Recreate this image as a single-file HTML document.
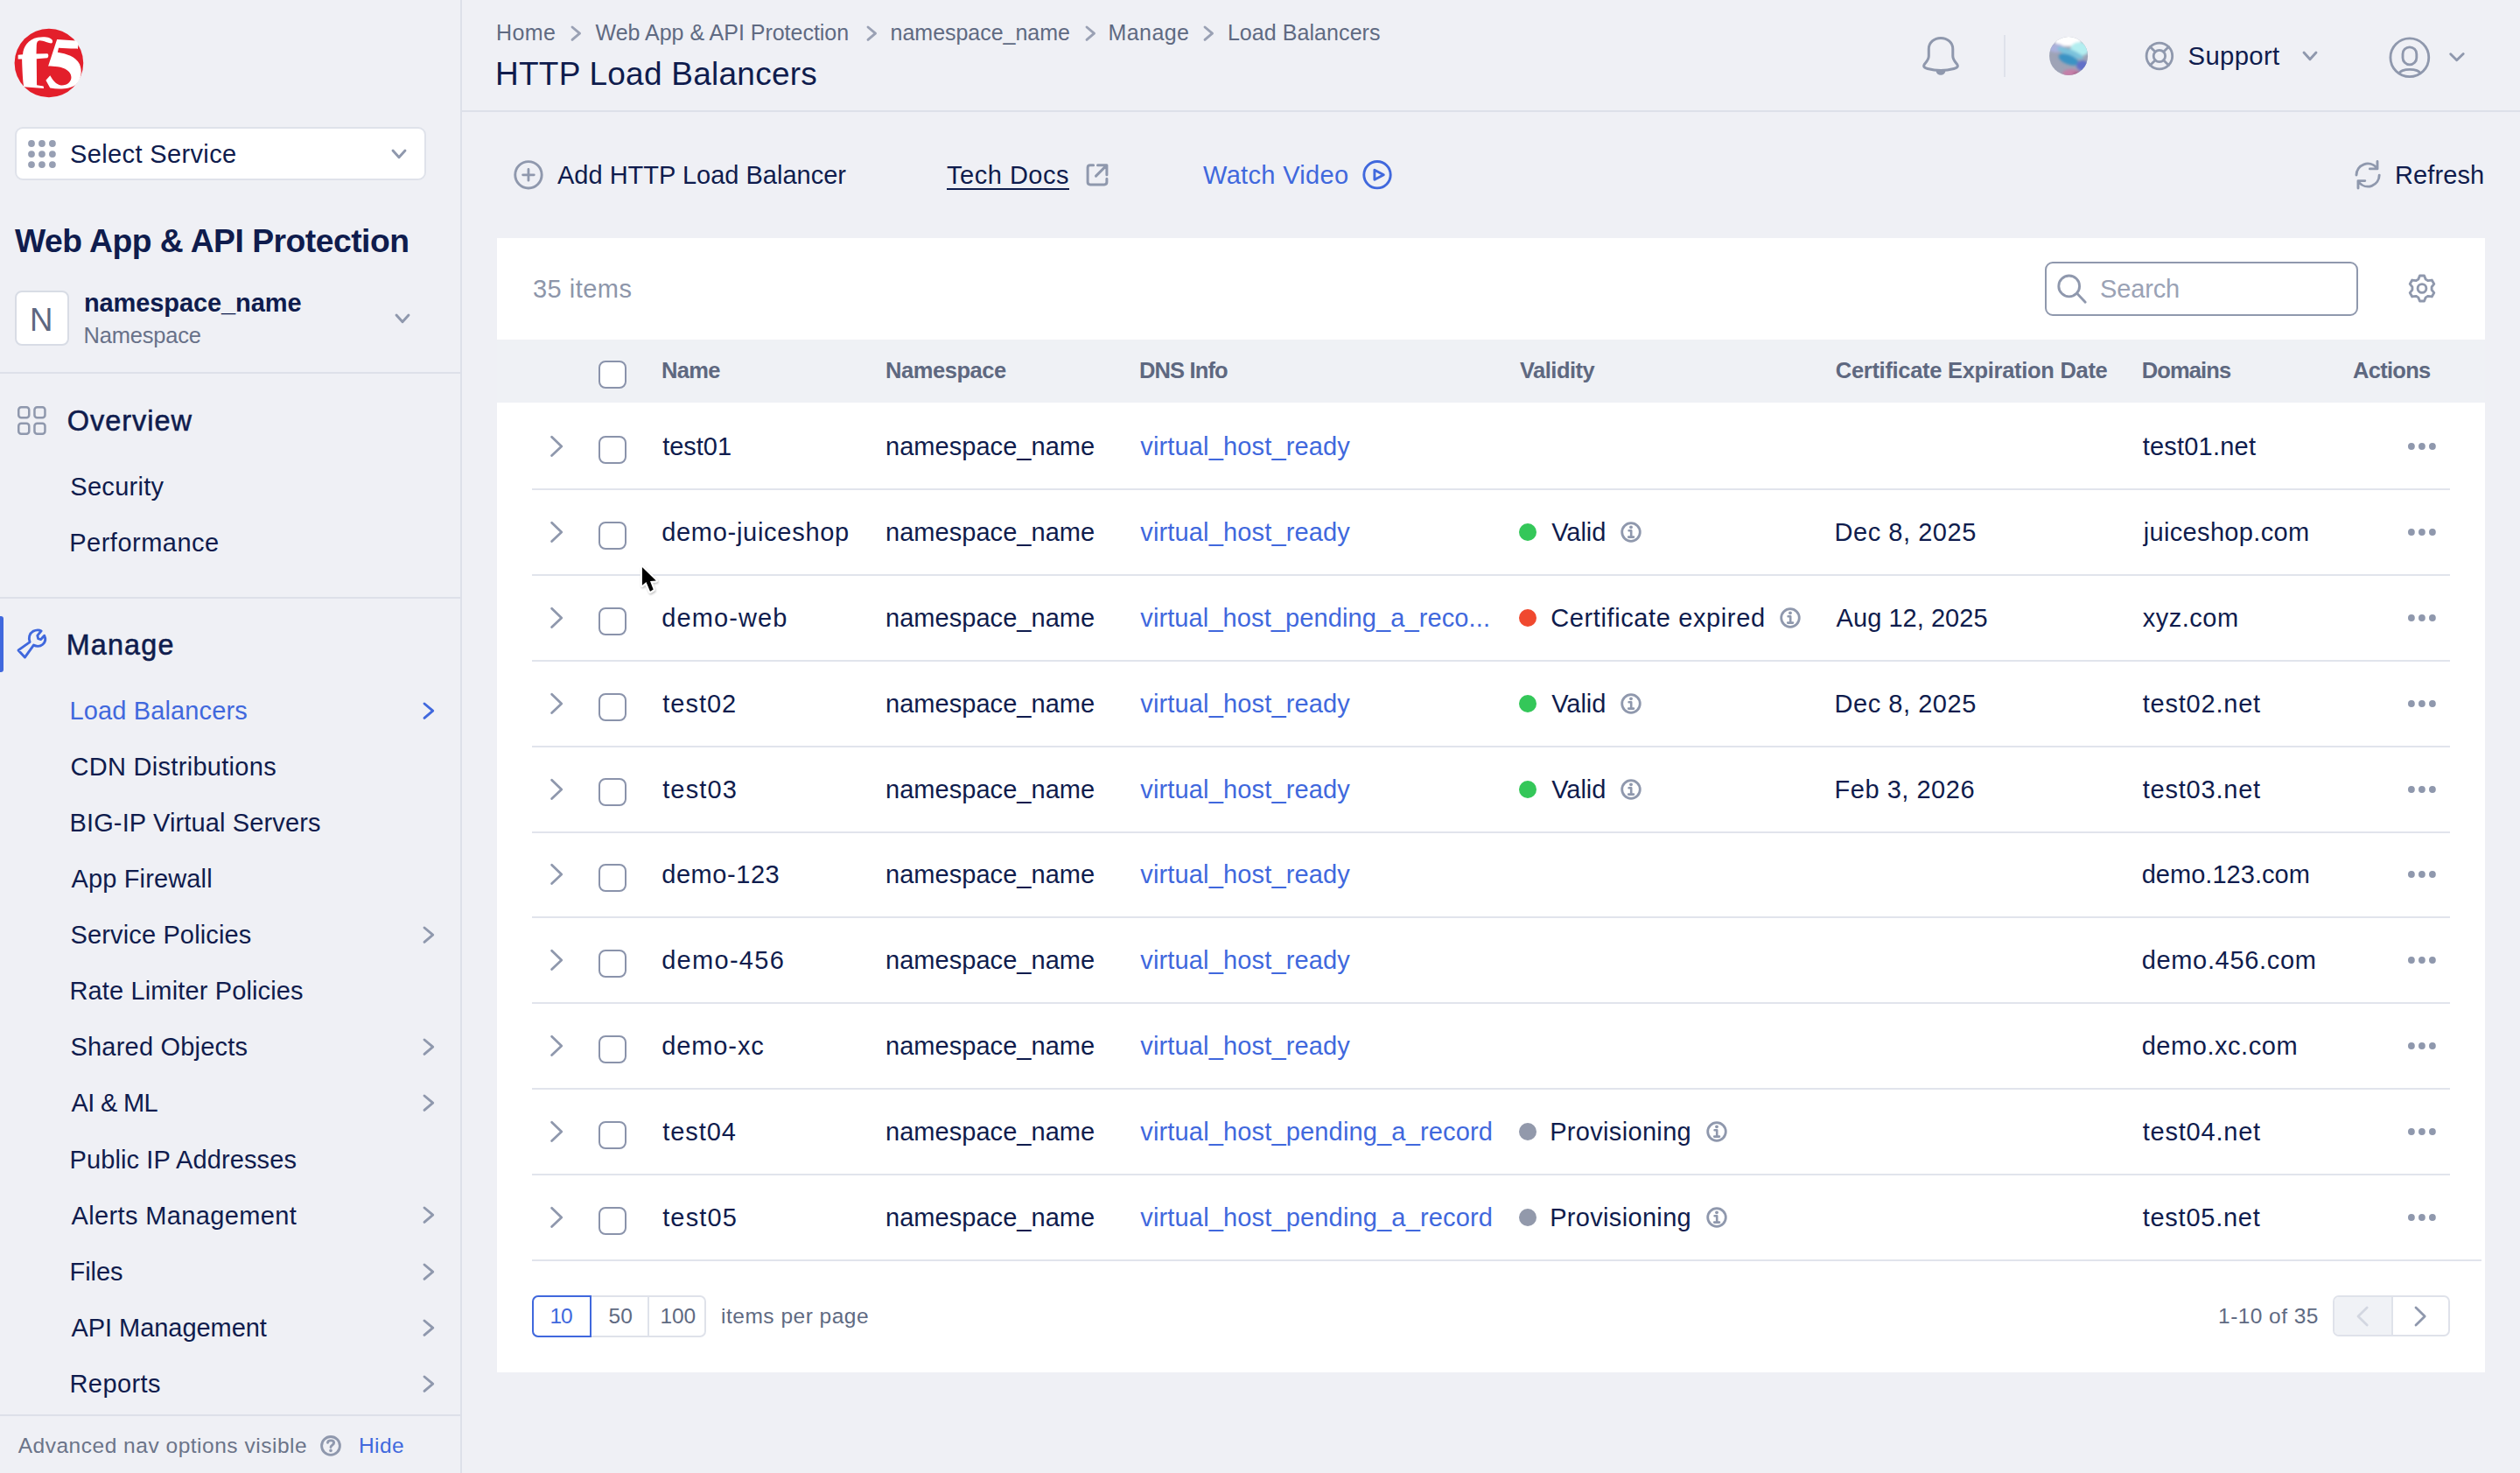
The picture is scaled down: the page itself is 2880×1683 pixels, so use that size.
<!DOCTYPE html>
<html><head><meta charset="utf-8"><style>
html,body{margin:0;padding:0;width:2880px;height:1683px;overflow:hidden;background:#eff0f5;font-family:"Liberation Sans", sans-serif;}
.t{position:absolute;white-space:nowrap;}
</style></head><body>
<div style="position:absolute;left:526px;top:0px;width:2px;height:1683px;background:#dde0e9"></div>
<svg style="position:absolute;left:16px;top:32px;" width="80" height="80" viewBox="0 0 1473 1473" fill="none"><circle cx="735" cy="737" r="724" fill="#e31f2b"/>
<path fill="#fff" d="M85 565 L185 558 C195 400 300 240 500 200 C650 175 790 200 812 270 C815 300 800 322 780 322 C740 320 620 265 540 262 C495 265 478 300 475 360 L470 545 L700 540 C730 550 735 610 700 630 L475 650 L480 1200 L620 1225 L628 1270 L205 1240 L198 1180 C185 1100 170 800 168 655 L85 652 Z"/>
<path fill="#fff" d="M905 240 L1300 268 C1330 290 1350 320 1352 345 L1342 440 C1320 425 1280 435 1200 432 L940 420 L918 512 C1100 540 1300 600 1380 760 C1440 900 1420 1080 1300 1190 C1180 1280 960 1300 760 1260 L670 1100 L760 1000 C820 1100 880 1190 990 1205 C1110 1215 1210 1130 1205 1030 C1195 910 1080 840 920 815 C850 805 780 805 720 800 Z"/></svg>
<div style="position:absolute;left:17px;top:145px;width:470px;height:61px;background:#fff;border:2px solid #dfe2ea;border-radius:9px;box-sizing:border-box"></div>
<svg style="position:absolute;left:32px;top:160px;" width="32" height="32" viewBox="0 0 32 32" fill="none"><circle cx="4.0" cy="4.0" r="3.9" fill="#979fb3"/><circle cx="4.0" cy="16.05" r="3.9" fill="#979fb3"/><circle cx="4.0" cy="28.1" r="3.9" fill="#979fb3"/><circle cx="15.95" cy="4.0" r="3.9" fill="#979fb3"/><circle cx="15.95" cy="16.05" r="3.9" fill="#979fb3"/><circle cx="15.95" cy="28.1" r="3.9" fill="#979fb3"/><circle cx="27.9" cy="4.0" r="3.9" fill="#979fb3"/><circle cx="27.9" cy="16.05" r="3.9" fill="#979fb3"/><circle cx="27.9" cy="28.1" r="3.9" fill="#979fb3"/></svg>
<div class="t" style="left:80.00px;top:162.30px;font-size:29px;line-height:29px;color:#0f1c4d;letter-spacing:0.367px;">Select Service</div>
<svg style="position:absolute;left:446.0px;top:168.9px;" width="20" height="13.8" viewBox="0 0 20 13.8" fill="none"><path d="M3 3 L10.0 10.8 L17 3" stroke="#8f98ad" stroke-width="2.9" stroke-linecap="round" stroke-linejoin="round" fill="none" /></svg>
<div class="t" style="left:17.00px;top:257.40px;font-size:37.3px;line-height:37.3px;color:#0f1c4d;font-weight:700;letter-spacing:-0.511px;">Web App &amp; API Protection</div>
<div style="position:absolute;left:16.7px;top:332.4px;width:62.6px;height:62.6px;background:#fff;border:2px solid #d8dce5;border-radius:8px;box-sizing:border-box"></div>
<div class="t" style="left:33.90px;top:347.90px;font-size:36.6px;line-height:36.6px;color:#5d6780;">N</div>
<div class="t" style="left:95.90px;top:332.00px;font-size:29px;line-height:29px;color:#0f1c4d;font-weight:700;letter-spacing:-0.088px;">namespace_name</div>
<div class="t" style="left:95.50px;top:370.80px;font-size:25.5px;line-height:25.5px;color:#687189;letter-spacing:-0.211px;">Namespace</div>
<svg style="position:absolute;left:449.5px;top:356.5px;" width="20" height="13.8" viewBox="0 0 20 13.8" fill="none"><path d="M3 3 L10.0 10.8 L17 3" stroke="#8f98ad" stroke-width="2.9" stroke-linecap="round" stroke-linejoin="round" fill="none" /></svg>
<div style="position:absolute;left:0px;top:425px;width:526px;height:2px;background:#dde0e9"></div>
<svg style="position:absolute;left:19.6px;top:463.5px;" width="34" height="34" viewBox="0 0 34 34" fill="none"><rect x="1.25" y="1.25" width="12" height="12" rx="3" stroke="#8f98ad" stroke-width="2.5"/><rect x="1.25" y="19.65" width="12" height="12" rx="3" stroke="#8f98ad" stroke-width="2.5"/><rect x="19.45" y="1.25" width="12" height="12" rx="3" stroke="#8f98ad" stroke-width="2.5"/><rect x="19.45" y="19.65" width="12" height="12" rx="3" stroke="#8f98ad" stroke-width="2.5"/></svg>
<div class="t" style="left:76.70px;top:464.90px;font-size:32.5px;line-height:32.5px;color:#0f1c4d;letter-spacing:0.990px;-webkit-text-stroke:0.55px currentColor;">Overview</div>
<div class="t" style="left:80.30px;top:542.30px;font-size:29px;line-height:29px;color:#0f1c4d;letter-spacing:0.292px;">Security</div>
<div class="t" style="left:79.30px;top:606.40px;font-size:29px;line-height:29px;color:#0f1c4d;letter-spacing:0.481px;">Performance</div>
<div style="position:absolute;left:0px;top:681.5px;width:526px;height:2px;background:#dde0e9"></div>
<div style="position:absolute;left:0px;top:704px;width:4px;height:64px;background:#4068dd;border-radius:0 3px 3px 0"></div>
<svg style="position:absolute;left:0px;top:700px;" width="220" height="70" viewBox="0 0 2520 802" fill="none"><path d="M240 492 L390 385 C370 330 385 270 430 245 C470 225 515 225 540 240 L490 300 L500 340 L535 350 L580 300 C600 340 595 385 560 415 C530 440 480 445 440 425 L325 585 Z" stroke="#4068dd" stroke-width="33" stroke-linejoin="round" fill="none"/></svg>
<div class="t" style="left:75.70px;top:721.00px;font-size:32.3px;line-height:32.3px;color:#0f1c4d;letter-spacing:1.190px;-webkit-text-stroke:0.55px currentColor;">Manage</div>
<div class="t" style="left:79.50px;top:798.00px;font-size:29px;line-height:29px;color:#4068dd;letter-spacing:0.136px;">Load Balancers</div>
<svg style="position:absolute;left:482.34999999999997px;top:800.8px;" width="15.7" height="22.4" viewBox="0 0 15.7 22.4" fill="none"><path d="M3 3 L12.7 11.2 L3 19.4" stroke="#4068dd" stroke-width="2.9" stroke-linecap="round" stroke-linejoin="round" fill="none" /></svg>
<div class="t" style="left:80.50px;top:862.07px;font-size:29px;line-height:29px;color:#0f1c4d;letter-spacing:0.297px;">CDN Distributions</div>
<div class="t" style="left:79.50px;top:926.14px;font-size:29px;line-height:29px;color:#0f1c4d;letter-spacing:0.137px;">BIG-IP Virtual Servers</div>
<div class="t" style="left:81.50px;top:990.21px;font-size:29px;line-height:29px;color:#0f1c4d;letter-spacing:0.144px;">App Firewall</div>
<div class="t" style="left:80.50px;top:1054.28px;font-size:29px;line-height:29px;color:#0f1c4d;letter-spacing:0.141px;">Service Policies</div>
<svg style="position:absolute;left:482.34999999999997px;top:1057.08px;" width="15.7" height="22.4" viewBox="0 0 15.7 22.4" fill="none"><path d="M3 3 L12.7 11.2 L3 19.4" stroke="#8f98ad" stroke-width="2.9" stroke-linecap="round" stroke-linejoin="round" fill="none" /></svg>
<div class="t" style="left:79.50px;top:1118.35px;font-size:29px;line-height:29px;color:#0f1c4d;letter-spacing:0.139px;">Rate Limiter Policies</div>
<div class="t" style="left:80.50px;top:1182.42px;font-size:29px;line-height:29px;color:#0f1c4d;letter-spacing:0.201px;">Shared Objects</div>
<svg style="position:absolute;left:482.34999999999997px;top:1185.22px;" width="15.7" height="22.4" viewBox="0 0 15.7 22.4" fill="none"><path d="M3 3 L12.7 11.2 L3 19.4" stroke="#8f98ad" stroke-width="2.9" stroke-linecap="round" stroke-linejoin="round" fill="none" /></svg>
<div class="t" style="left:81.50px;top:1246.49px;font-size:29px;line-height:29px;color:#0f1c4d;letter-spacing:-0.669px;">AI &amp; ML</div>
<svg style="position:absolute;left:482.34999999999997px;top:1249.29px;" width="15.7" height="22.4" viewBox="0 0 15.7 22.4" fill="none"><path d="M3 3 L12.7 11.2 L3 19.4" stroke="#8f98ad" stroke-width="2.9" stroke-linecap="round" stroke-linejoin="round" fill="none" /></svg>
<div class="t" style="left:79.50px;top:1310.56px;font-size:29px;line-height:29px;color:#0f1c4d;letter-spacing:0.116px;">Public IP Addresses</div>
<div class="t" style="left:81.50px;top:1374.63px;font-size:29px;line-height:29px;color:#0f1c4d;letter-spacing:0.363px;">Alerts Management</div>
<svg style="position:absolute;left:482.34999999999997px;top:1377.4299999999998px;" width="15.7" height="22.4" viewBox="0 0 15.7 22.4" fill="none"><path d="M3 3 L12.7 11.2 L3 19.4" stroke="#8f98ad" stroke-width="2.9" stroke-linecap="round" stroke-linejoin="round" fill="none" /></svg>
<div class="t" style="left:79.50px;top:1438.70px;font-size:29px;line-height:29px;color:#0f1c4d;letter-spacing:-0.032px;">Files</div>
<svg style="position:absolute;left:482.34999999999997px;top:1441.4999999999998px;" width="15.7" height="22.4" viewBox="0 0 15.7 22.4" fill="none"><path d="M3 3 L12.7 11.2 L3 19.4" stroke="#8f98ad" stroke-width="2.9" stroke-linecap="round" stroke-linejoin="round" fill="none" /></svg>
<div class="t" style="left:81.50px;top:1502.77px;font-size:29px;line-height:29px;color:#0f1c4d;letter-spacing:-0.055px;">API Management</div>
<svg style="position:absolute;left:482.34999999999997px;top:1505.57px;" width="15.7" height="22.4" viewBox="0 0 15.7 22.4" fill="none"><path d="M3 3 L12.7 11.2 L3 19.4" stroke="#8f98ad" stroke-width="2.9" stroke-linecap="round" stroke-linejoin="round" fill="none" /></svg>
<div class="t" style="left:79.50px;top:1566.84px;font-size:29px;line-height:29px;color:#0f1c4d;letter-spacing:0.410px;">Reports</div>
<svg style="position:absolute;left:482.34999999999997px;top:1569.6399999999999px;" width="15.7" height="22.4" viewBox="0 0 15.7 22.4" fill="none"><path d="M3 3 L12.7 11.2 L3 19.4" stroke="#8f98ad" stroke-width="2.9" stroke-linecap="round" stroke-linejoin="round" fill="none" /></svg>
<div style="position:absolute;left:0px;top:1616px;width:526px;height:2px;background:#dde0e9"></div>
<div class="t" style="left:20.70px;top:1640.00px;font-size:24.5px;line-height:24.5px;color:#6b7489;letter-spacing:0.517px;">Advanced nav options visible</div>
<svg style="position:absolute;left:364px;top:1638px;" width="28" height="28" viewBox="0 0 28 28" fill="none"><circle cx="14" cy="13.9" r="10.4" stroke="#8f98ad" stroke-width="2.85" fill="none"/><path d="M10.5 10.2 C11 7.2 17.6 7 17.6 10.6 C17.6 13 14 13.2 14 15.6" stroke="#8f98ad" stroke-width="2.9" stroke-linecap="round" stroke-linejoin="round" fill="none" /><circle cx="14" cy="19.4" r="1.8" fill="#8f98ad"/></svg>
<div class="t" style="left:409.90px;top:1639.80px;font-size:24.5px;line-height:24.5px;color:#4068dd;letter-spacing:0.446px;">Hide</div>
<div style="position:absolute;left:528px;top:126px;width:2352px;height:2px;background:#dde0e9"></div>
<div class="t" style="left:567.00px;top:25.30px;font-size:25px;line-height:25px;color:#5f6a82;letter-spacing:0.406px;">Home</div>
<div class="t" style="left:680.60px;top:25.30px;font-size:25px;line-height:25px;color:#5f6a82;letter-spacing:-0.019px;">Web App &amp; API Protection</div>
<div class="t" style="left:1017.60px;top:25.30px;font-size:25px;line-height:25px;color:#5f6a82;letter-spacing:-0.030px;">namespace_name</div>
<div class="t" style="left:1266.60px;top:25.30px;font-size:25px;line-height:25px;color:#5f6a82;letter-spacing:0.392px;">Manage</div>
<div class="t" style="left:1402.90px;top:25.30px;font-size:25px;line-height:25px;color:#5f6a82;letter-spacing:0.067px;">Load Balancers</div>
<svg style="position:absolute;left:650.65px;top:28.400000000000002px;" width="14.5" height="20.4" viewBox="0 0 14.5 20.4" fill="none"><path d="M3 3 L11.5 10.2 L3 17.4" stroke="#9aa1b4" stroke-width="2.9" stroke-linecap="round" stroke-linejoin="round" fill="none" /></svg>
<svg style="position:absolute;left:988.65px;top:28.400000000000002px;" width="14.5" height="20.4" viewBox="0 0 14.5 20.4" fill="none"><path d="M3 3 L11.5 10.2 L3 17.4" stroke="#9aa1b4" stroke-width="2.9" stroke-linecap="round" stroke-linejoin="round" fill="none" /></svg>
<svg style="position:absolute;left:1238.75px;top:28.400000000000002px;" width="14.5" height="20.4" viewBox="0 0 14.5 20.4" fill="none"><path d="M3 3 L11.5 10.2 L3 17.4" stroke="#9aa1b4" stroke-width="2.9" stroke-linecap="round" stroke-linejoin="round" fill="none" /></svg>
<svg style="position:absolute;left:1374.35px;top:28.400000000000002px;" width="14.5" height="20.4" viewBox="0 0 14.5 20.4" fill="none"><path d="M3 3 L11.5 10.2 L3 17.4" stroke="#9aa1b4" stroke-width="2.9" stroke-linecap="round" stroke-linejoin="round" fill="none" /></svg>
<div class="t" style="left:566.00px;top:65.60px;font-size:37px;line-height:37px;color:#0f1c4d;letter-spacing:0.250px;">HTTP Load Balancers</div>
<svg style="position:absolute;left:2186px;top:36px;" width="64" height="60" viewBox="0 0 64 60" fill="none"><path d="M18.3 28 L18.3 20 C18.3 12.5 24.5 7.5 32 7.5 C39.5 7.5 45.8 12.5 45.8 20 L45.8 28 C45.8 31 47 33 49.5 36 C52.5 39.5 52 41 47 42.5 C38 45 26 45 17 42.5 C12 41 11.5 39.5 14.5 36 C17 33 18.3 31 18.3 28 Z" stroke="#8f98ad" stroke-width="3" stroke-linecap="round" stroke-linejoin="round" fill="none" /><path d="M26.6 44.4 A5.4 5.4 0 0 0 37.4 44.4 Z" fill="#8f98ad"/></svg>
<div style="position:absolute;left:2290px;top:40px;width:2px;height:48px;background:#dfe2ea"></div>
<svg style="position:absolute;left:2336px;top:36px;" width="60" height="60" viewBox="0 0 60 60" fill="none"><defs><clipPath id="gc"><circle cx="28.1" cy="28" r="22"/></clipPath><filter id="gb" x="-50%" y="-50%" width="200%" height="200%"><feGaussianBlur stdDeviation="1.8"/></filter></defs>
<g clip-path="url(#gc)"><rect x="0" y="0" width="60" height="60" fill="#9ea3b6"/>
<g filter="url(#gb)">
<ellipse cx="27" cy="9" rx="16" ry="8" fill="#ffffff"/>
<ellipse cx="14" cy="19" rx="9" ry="5" fill="#aab0dc"/>
<ellipse cx="41" cy="20" rx="11" ry="8" fill="#b3eef0"/>
<ellipse cx="30" cy="24.5" rx="16" ry="4" fill="#7cc2dc" transform="rotate(22 30 24.5)"/>
<ellipse cx="28" cy="32" rx="12" ry="5.5" fill="#3a93c4" transform="rotate(22 28 32)"/>
<ellipse cx="44" cy="39" rx="7" ry="6" fill="#6270c8"/>
<ellipse cx="31" cy="48" rx="10" ry="5" fill="#c47fa8"/>
<ellipse cx="38" cy="49" rx="5" ry="3" fill="#a8668e"/>
</g></g></svg>
<svg style="position:absolute;left:2440px;top:36px;" width="60" height="60" viewBox="0 0 60 60" fill="none"><circle cx="27.9" cy="28" r="14.8" stroke="#8f98ad" stroke-width="2.8" fill="none"/><circle cx="27.9" cy="28" r="6.7" stroke="#8f98ad" stroke-width="2.8" fill="none"/><path d="M17.4 17.5 L23.2 23.3 M38.4 17.5 L32.6 23.3 M17.4 38.5 L23.2 32.7 M38.4 38.5 L32.6 32.7" stroke="#8f98ad" stroke-width="2.8" stroke-linecap="round" stroke-linejoin="round" fill="none" /></svg>
<div class="t" style="left:2500.60px;top:49.00px;font-size:29.3px;line-height:29.3px;color:#0f1c4d;letter-spacing:0.321px;">Support</div>
<svg style="position:absolute;left:2630.0px;top:56.6px;" width="20" height="13.8" viewBox="0 0 20 13.8" fill="none"><path d="M3 3 L10.0 10.8 L17 3" stroke="#8f98ad" stroke-width="2.9" stroke-linecap="round" stroke-linejoin="round" fill="none" /></svg>
<svg style="position:absolute;left:2720px;top:36px;" width="110" height="60" viewBox="0 0 110 60" fill="none"><defs><clipPath id="uc"><circle cx="33.85" cy="29.7" r="21.9"/></clipPath></defs><circle cx="33.85" cy="29.7" r="21.9" stroke="#8f98ad" stroke-width="2.85" fill="none"/><rect x="26" y="17.8" width="15.8" height="20.1" rx="7.9" stroke="#8f98ad" stroke-width="2.85" fill="none"/><ellipse cx="34" cy="47.8" rx="11.6" ry="4.4" stroke="#8f98ad" stroke-width="2.85" fill="none" clip-path="url(#uc)"/><path d="M80.7 25.8 L87.7 32.7 L95.2 25.5" stroke="#8f98ad" stroke-width="2.9" stroke-linecap="round" stroke-linejoin="round" fill="none" /></svg>
<svg style="position:absolute;left:580px;top:176px;" width="60" height="48" viewBox="0 0 60 48" fill="none"><circle cx="23.96" cy="23.8" r="15.2" stroke="#8f98ad" stroke-width="2.9" fill="none"/><path d="M23.96 17.4 V30.2 M17.6 23.8 H30.3" stroke="#8f98ad" stroke-width="2.8" stroke-linecap="round" stroke-linejoin="round" fill="none" /></svg>
<div class="t" style="left:637.00px;top:185.80px;font-size:29px;line-height:29px;color:#0f1c4d;">Add HTTP Load Balancer</div>
<div class="t" style="left:1082.00px;top:185.80px;font-size:29px;line-height:29px;color:#0f1c4d;letter-spacing:0.514px;">Tech Docs</div>
<div style="position:absolute;left:1082px;top:215.2px;width:139.5px;height:2.2px;background:#0f1c4d"></div>
<svg style="position:absolute;left:1232px;top:176px;" width="48" height="48" viewBox="0 0 48 48" fill="none"><path d="M17.6 12.7 H14 Q11.1 12.7 11.1 15.6 V32 Q11.1 34.9 14 34.9 H30 Q32.9 34.9 32.9 32 V28.3 M22.5 12.7 H32.9 V23.8 M20.5 25.1 L32.5 13.1" stroke="#8f98ad" stroke-width="3" stroke-linecap="round" stroke-linejoin="round" fill="none" /></svg>
<div class="t" style="left:1375.00px;top:185.80px;font-size:29px;line-height:29px;color:#4068dd;letter-spacing:0.331px;">Watch Video</div>
<svg style="position:absolute;left:1550px;top:176px;" width="50" height="48" viewBox="0 0 50 48" fill="none"><circle cx="24" cy="23.7" r="15.2" stroke="#4068dd" stroke-width="2.9" fill="none"/><path d="M20.9 18.3 V29.3 L31.3 23.8 Z" stroke="#4068dd" stroke-width="2.9" stroke-linecap="round" stroke-linejoin="round" fill="none" /></svg>
<svg style="position:absolute;left:2680px;top:176px;" width="50" height="48" viewBox="0 0 50 48" fill="none"><path d="M13 24.1 A13.1 13.1 0 0 1 36 15.6 M37 8.5 V16.9 H28.4 M39.2 24.1 A13.1 13.1 0 0 1 16.2 32.6 M15 39.1 V30.6 H22.8" stroke="#8f98ad" stroke-width="2.9" stroke-linecap="round" stroke-linejoin="round" fill="none" /></svg>
<div class="t" style="left:2737.00px;top:185.80px;font-size:29px;line-height:29px;color:#0f1c4d;letter-spacing:0.098px;">Refresh</div>
<div style="position:absolute;left:568px;top:272px;width:2272px;height:1296px;background:#fff"></div>
<div class="t" style="left:609.00px;top:316.00px;font-size:29px;line-height:29px;color:#8d96aa;letter-spacing:0.471px;">35 items</div>
<div style="position:absolute;left:2337px;top:298.6px;width:358px;height:62.4px;border:2px solid #8f98ad;border-radius:9px;box-sizing:border-box;background:#fff"></div>
<svg style="position:absolute;left:2340px;top:300px;" width="60" height="60" viewBox="0 0 60 60" fill="none"><circle cx="24.7" cy="26.9" r="11.9" stroke="#8f98ad" stroke-width="2.85" fill="none"/><path d="M34.2 35.8 L43.2 45.2" stroke="#8f98ad" stroke-width="2.85" stroke-linecap="round" stroke-linejoin="round" fill="none" /></svg>
<div class="t" style="left:2400.00px;top:316.00px;font-size:29px;line-height:29px;color:#9aa2b5;letter-spacing:-0.151px;">Search</div>
<svg style="position:absolute;left:2740px;top:300px;" width="60" height="60" viewBox="0 0 60 60" fill="none"><path d="M23.80 19.12 L25.45 15.02 L30.55 15.02 L32.20 19.12 L34.90 20.67 L39.26 20.05 L41.81 24.47 L39.09 27.94 L39.09 31.06 L41.81 34.53 L39.26 38.95 L34.90 38.33 L32.20 39.88 L30.55 43.98 L25.45 43.98 L23.80 39.88 L21.10 38.33 L16.74 38.95 L14.19 34.53 L16.91 31.06 L16.91 27.94 L14.19 24.47 L16.74 20.05 L21.10 20.67 Z" stroke="#8f98ad" stroke-width="2.85" stroke-linecap="round" stroke-linejoin="round" fill="none" /><circle cx="28" cy="29.5" r="4.9" stroke="#8f98ad" stroke-width="2.85" fill="none"/></svg>
<div style="position:absolute;left:568px;top:388px;width:2272px;height:72px;background:#eff1f5"></div>
<div style="position:absolute;left:684px;top:411.5px;width:32px;height:32px;border:2px solid #8a93ab;border-radius:8px;box-sizing:border-box;background:#fff"></div>
<div class="t" style="left:756.00px;top:411.00px;font-size:25.5px;line-height:25.5px;color:#5e6880;font-weight:700;letter-spacing:-0.657px;">Name</div>
<div class="t" style="left:1012.00px;top:411.00px;font-size:25.5px;line-height:25.5px;color:#5e6880;font-weight:700;letter-spacing:-0.447px;">Namespace</div>
<div class="t" style="left:1302.00px;top:411.00px;font-size:25.5px;line-height:25.5px;color:#5e6880;font-weight:700;letter-spacing:-0.868px;">DNS Info</div>
<div class="t" style="left:1737.00px;top:411.00px;font-size:25.5px;line-height:25.5px;color:#5e6880;font-weight:700;letter-spacing:-0.501px;">Validity</div>
<div class="t" style="left:2097.80px;top:411.00px;font-size:25.5px;line-height:25.5px;color:#5e6880;font-weight:700;letter-spacing:-0.302px;">Certificate Expiration Date</div>
<div class="t" style="left:2447.70px;top:411.00px;font-size:25.5px;line-height:25.5px;color:#5e6880;font-weight:700;letter-spacing:-0.868px;">Domains</div>
<div class="t" style="left:2689.00px;top:411.00px;font-size:25.5px;line-height:25.5px;color:#5e6880;font-weight:700;letter-spacing:-0.721px;">Actions</div>
<svg style="position:absolute;left:616px;top:486.0px;" width="40" height="48" viewBox="0 0 40 48" fill="none"><path d="M14.6 13.3 L25.75 24 L14.6 34.5" stroke="#8f98ad" stroke-width="2.8" stroke-linecap="round" stroke-linejoin="round" fill="none" /></svg>
<div style="position:absolute;left:684.1px;top:497.85px;width:32px;height:32px;border:2px solid #8a93ab;border-radius:8px;box-sizing:border-box;background:#fff"></div>
<div class="t" style="left:757.20px;top:496.00px;font-size:29px;line-height:29px;color:#0f1c4d;letter-spacing:-0.034px;">test01</div>
<div class="t" style="left:1012.00px;top:496.00px;font-size:29px;line-height:29px;color:#0f1c4d;letter-spacing:0.041px;">namespace_name</div>
<div class="t" style="left:1303.30px;top:496.00px;font-size:29px;line-height:29px;color:#4068dd;letter-spacing:0.149px;">virtual_host_ready</div>
<div class="t" style="left:2448.70px;top:496.00px;font-size:29px;line-height:29px;color:#0f1c4d;letter-spacing:0.210px;">test01.net</div>
<svg style="position:absolute;left:2750px;top:504.0px;" width="36" height="12" viewBox="0 0 36 12" fill="none"><circle cx="5.9" cy="6" r="3.9" fill="#8f98ad"/><circle cx="17.9" cy="6" r="3.9" fill="#8f98ad"/><circle cx="29.9" cy="6" r="3.9" fill="#8f98ad"/></svg>
<div style="position:absolute;left:608px;top:558.0px;width:2192px;height:2px;background:#e1e4ec"></div>
<svg style="position:absolute;left:616px;top:583.89px;" width="40" height="48" viewBox="0 0 40 48" fill="none"><path d="M14.6 13.3 L25.75 24 L14.6 34.5" stroke="#8f98ad" stroke-width="2.8" stroke-linecap="round" stroke-linejoin="round" fill="none" /></svg>
<div style="position:absolute;left:684.1px;top:595.74px;width:32px;height:32px;border:2px solid #8a93ab;border-radius:8px;box-sizing:border-box;background:#fff"></div>
<div class="t" style="left:756.20px;top:593.89px;font-size:29px;line-height:29px;color:#0f1c4d;letter-spacing:0.715px;">demo-juiceshop</div>
<div class="t" style="left:1012.00px;top:593.89px;font-size:29px;line-height:29px;color:#0f1c4d;letter-spacing:0.041px;">namespace_name</div>
<div class="t" style="left:1303.30px;top:593.89px;font-size:29px;line-height:29px;color:#4068dd;letter-spacing:0.149px;">virtual_host_ready</div>
<div style="position:absolute;left:1735.85px;top:597.94px;width:19.9px;height:19.9px;border-radius:50%;background:#34c759"></div>
<div class="t" style="left:1773.20px;top:593.89px;font-size:29px;line-height:29px;color:#0f1c4d;letter-spacing:-0.051px;">Valid</div>
<svg style="position:absolute;left:1850.1px;top:593.89px;" width="28" height="28" viewBox="0 0 28 28" fill="none"><circle cx="14" cy="14" r="10.3" stroke="#8f98ad" stroke-width="2.8" fill="none"/><circle cx="14" cy="8.3" r="1.9" fill="#8f98ad"/><path d="M11.6 12.2 H14.2 V19.6 M11.2 19.6 H17" stroke="#8f98ad" stroke-width="2.6" stroke-linecap="round" stroke-linejoin="round" fill="none" /></svg>
<div class="t" style="left:2096.60px;top:593.89px;font-size:29px;line-height:29px;color:#0f1c4d;letter-spacing:0.534px;">Dec 8, 2025</div>
<div class="t" style="left:2449.70px;top:593.89px;font-size:29px;line-height:29px;color:#0f1c4d;letter-spacing:0.341px;">juiceshop.com</div>
<svg style="position:absolute;left:2750px;top:601.89px;" width="36" height="12" viewBox="0 0 36 12" fill="none"><circle cx="5.9" cy="6" r="3.9" fill="#8f98ad"/><circle cx="17.9" cy="6" r="3.9" fill="#8f98ad"/><circle cx="29.9" cy="6" r="3.9" fill="#8f98ad"/></svg>
<div style="position:absolute;left:608px;top:655.89px;width:2192px;height:2px;background:#e1e4ec"></div>
<svg style="position:absolute;left:616px;top:681.78px;" width="40" height="48" viewBox="0 0 40 48" fill="none"><path d="M14.6 13.3 L25.75 24 L14.6 34.5" stroke="#8f98ad" stroke-width="2.8" stroke-linecap="round" stroke-linejoin="round" fill="none" /></svg>
<div style="position:absolute;left:684.1px;top:693.63px;width:32px;height:32px;border:2px solid #8a93ab;border-radius:8px;box-sizing:border-box;background:#fff"></div>
<div class="t" style="left:756.20px;top:691.78px;font-size:29px;line-height:29px;color:#0f1c4d;letter-spacing:1.118px;">demo-web</div>
<div class="t" style="left:1012.00px;top:691.78px;font-size:29px;line-height:29px;color:#0f1c4d;letter-spacing:0.041px;">namespace_name</div>
<div class="t" style="left:1303.30px;top:691.78px;font-size:29px;line-height:29px;color:#4068dd;letter-spacing:0.105px;">virtual_host_pending_a_reco...</div>
<div style="position:absolute;left:1735.85px;top:695.83px;width:19.9px;height:19.9px;border-radius:50%;background:#f0492f"></div>
<div class="t" style="left:1772.20px;top:691.78px;font-size:29px;line-height:29px;color:#0f1c4d;letter-spacing:0.618px;">Certificate expired</div>
<svg style="position:absolute;left:2031.7px;top:691.78px;" width="28" height="28" viewBox="0 0 28 28" fill="none"><circle cx="14" cy="14" r="10.3" stroke="#8f98ad" stroke-width="2.8" fill="none"/><circle cx="14" cy="8.3" r="1.9" fill="#8f98ad"/><path d="M11.6 12.2 H14.2 V19.6 M11.2 19.6 H17" stroke="#8f98ad" stroke-width="2.6" stroke-linecap="round" stroke-linejoin="round" fill="none" /></svg>
<div class="t" style="left:2098.60px;top:691.78px;font-size:29px;line-height:29px;color:#0f1c4d;letter-spacing:0.035px;">Aug 12, 2025</div>
<div class="t" style="left:2448.70px;top:691.78px;font-size:29px;line-height:29px;color:#0f1c4d;letter-spacing:0.519px;">xyz.com</div>
<svg style="position:absolute;left:2750px;top:699.78px;" width="36" height="12" viewBox="0 0 36 12" fill="none"><circle cx="5.9" cy="6" r="3.9" fill="#8f98ad"/><circle cx="17.9" cy="6" r="3.9" fill="#8f98ad"/><circle cx="29.9" cy="6" r="3.9" fill="#8f98ad"/></svg>
<div style="position:absolute;left:608px;top:753.78px;width:2192px;height:2px;background:#e1e4ec"></div>
<svg style="position:absolute;left:616px;top:779.6700000000001px;" width="40" height="48" viewBox="0 0 40 48" fill="none"><path d="M14.6 13.3 L25.75 24 L14.6 34.5" stroke="#8f98ad" stroke-width="2.8" stroke-linecap="round" stroke-linejoin="round" fill="none" /></svg>
<div style="position:absolute;left:684.1px;top:791.5200000000001px;width:32px;height:32px;border:2px solid #8a93ab;border-radius:8px;box-sizing:border-box;background:#fff"></div>
<div class="t" style="left:757.20px;top:789.67px;font-size:29px;line-height:29px;color:#0f1c4d;letter-spacing:1.006px;">test02</div>
<div class="t" style="left:1012.00px;top:789.67px;font-size:29px;line-height:29px;color:#0f1c4d;letter-spacing:0.041px;">namespace_name</div>
<div class="t" style="left:1303.30px;top:789.67px;font-size:29px;line-height:29px;color:#4068dd;letter-spacing:0.149px;">virtual_host_ready</div>
<div style="position:absolute;left:1735.85px;top:793.72px;width:19.9px;height:19.9px;border-radius:50%;background:#34c759"></div>
<div class="t" style="left:1773.20px;top:789.67px;font-size:29px;line-height:29px;color:#0f1c4d;letter-spacing:-0.051px;">Valid</div>
<svg style="position:absolute;left:1850.1px;top:789.6700000000001px;" width="28" height="28" viewBox="0 0 28 28" fill="none"><circle cx="14" cy="14" r="10.3" stroke="#8f98ad" stroke-width="2.8" fill="none"/><circle cx="14" cy="8.3" r="1.9" fill="#8f98ad"/><path d="M11.6 12.2 H14.2 V19.6 M11.2 19.6 H17" stroke="#8f98ad" stroke-width="2.6" stroke-linecap="round" stroke-linejoin="round" fill="none" /></svg>
<div class="t" style="left:2096.60px;top:789.67px;font-size:29px;line-height:29px;color:#0f1c4d;letter-spacing:0.534px;">Dec 8, 2025</div>
<div class="t" style="left:2448.70px;top:789.67px;font-size:29px;line-height:29px;color:#0f1c4d;letter-spacing:0.787px;">test02.net</div>
<svg style="position:absolute;left:2750px;top:797.6700000000001px;" width="36" height="12" viewBox="0 0 36 12" fill="none"><circle cx="5.9" cy="6" r="3.9" fill="#8f98ad"/><circle cx="17.9" cy="6" r="3.9" fill="#8f98ad"/><circle cx="29.9" cy="6" r="3.9" fill="#8f98ad"/></svg>
<div style="position:absolute;left:608px;top:851.6700000000001px;width:2192px;height:2px;background:#e1e4ec"></div>
<svg style="position:absolute;left:616px;top:877.56px;" width="40" height="48" viewBox="0 0 40 48" fill="none"><path d="M14.6 13.3 L25.75 24 L14.6 34.5" stroke="#8f98ad" stroke-width="2.8" stroke-linecap="round" stroke-linejoin="round" fill="none" /></svg>
<div style="position:absolute;left:684.1px;top:889.41px;width:32px;height:32px;border:2px solid #8a93ab;border-radius:8px;box-sizing:border-box;background:#fff"></div>
<div class="t" style="left:757.20px;top:887.56px;font-size:29px;line-height:29px;color:#0f1c4d;letter-spacing:1.126px;">test03</div>
<div class="t" style="left:1012.00px;top:887.56px;font-size:29px;line-height:29px;color:#0f1c4d;letter-spacing:0.041px;">namespace_name</div>
<div class="t" style="left:1303.30px;top:887.56px;font-size:29px;line-height:29px;color:#4068dd;letter-spacing:0.149px;">virtual_host_ready</div>
<div style="position:absolute;left:1735.85px;top:891.61px;width:19.9px;height:19.9px;border-radius:50%;background:#34c759"></div>
<div class="t" style="left:1773.20px;top:887.56px;font-size:29px;line-height:29px;color:#0f1c4d;letter-spacing:-0.051px;">Valid</div>
<svg style="position:absolute;left:1850.1px;top:887.56px;" width="28" height="28" viewBox="0 0 28 28" fill="none"><circle cx="14" cy="14" r="10.3" stroke="#8f98ad" stroke-width="2.8" fill="none"/><circle cx="14" cy="8.3" r="1.9" fill="#8f98ad"/><path d="M11.6 12.2 H14.2 V19.6 M11.2 19.6 H17" stroke="#8f98ad" stroke-width="2.6" stroke-linecap="round" stroke-linejoin="round" fill="none" /></svg>
<div class="t" style="left:2096.60px;top:887.56px;font-size:29px;line-height:29px;color:#0f1c4d;letter-spacing:0.514px;">Feb 3, 2026</div>
<div class="t" style="left:2448.70px;top:887.56px;font-size:29px;line-height:29px;color:#0f1c4d;letter-spacing:0.787px;">test03.net</div>
<svg style="position:absolute;left:2750px;top:895.56px;" width="36" height="12" viewBox="0 0 36 12" fill="none"><circle cx="5.9" cy="6" r="3.9" fill="#8f98ad"/><circle cx="17.9" cy="6" r="3.9" fill="#8f98ad"/><circle cx="29.9" cy="6" r="3.9" fill="#8f98ad"/></svg>
<div style="position:absolute;left:608px;top:949.56px;width:2192px;height:2px;background:#e1e4ec"></div>
<svg style="position:absolute;left:616px;top:975.45px;" width="40" height="48" viewBox="0 0 40 48" fill="none"><path d="M14.6 13.3 L25.75 24 L14.6 34.5" stroke="#8f98ad" stroke-width="2.8" stroke-linecap="round" stroke-linejoin="round" fill="none" /></svg>
<div style="position:absolute;left:684.1px;top:987.3000000000001px;width:32px;height:32px;border:2px solid #8a93ab;border-radius:8px;box-sizing:border-box;background:#fff"></div>
<div class="t" style="left:756.20px;top:985.45px;font-size:29px;line-height:29px;color:#0f1c4d;letter-spacing:0.563px;">demo-123</div>
<div class="t" style="left:1012.00px;top:985.45px;font-size:29px;line-height:29px;color:#0f1c4d;letter-spacing:0.041px;">namespace_name</div>
<div class="t" style="left:1303.30px;top:985.45px;font-size:29px;line-height:29px;color:#4068dd;letter-spacing:0.149px;">virtual_host_ready</div>
<div class="t" style="left:2447.70px;top:985.45px;font-size:29px;line-height:29px;color:#0f1c4d;letter-spacing:0.030px;">demo.123.com</div>
<svg style="position:absolute;left:2750px;top:993.45px;" width="36" height="12" viewBox="0 0 36 12" fill="none"><circle cx="5.9" cy="6" r="3.9" fill="#8f98ad"/><circle cx="17.9" cy="6" r="3.9" fill="#8f98ad"/><circle cx="29.9" cy="6" r="3.9" fill="#8f98ad"/></svg>
<div style="position:absolute;left:608px;top:1047.45px;width:2192px;height:2px;background:#e1e4ec"></div>
<svg style="position:absolute;left:616px;top:1073.3400000000001px;" width="40" height="48" viewBox="0 0 40 48" fill="none"><path d="M14.6 13.3 L25.75 24 L14.6 34.5" stroke="#8f98ad" stroke-width="2.8" stroke-linecap="round" stroke-linejoin="round" fill="none" /></svg>
<div style="position:absolute;left:684.1px;top:1085.19px;width:32px;height:32px;border:2px solid #8a93ab;border-radius:8px;box-sizing:border-box;background:#fff"></div>
<div class="t" style="left:756.20px;top:1083.34px;font-size:29px;line-height:29px;color:#0f1c4d;letter-spacing:1.292px;">demo-456</div>
<div class="t" style="left:1012.00px;top:1083.34px;font-size:29px;line-height:29px;color:#0f1c4d;letter-spacing:0.041px;">namespace_name</div>
<div class="t" style="left:1303.30px;top:1083.34px;font-size:29px;line-height:29px;color:#4068dd;letter-spacing:0.149px;">virtual_host_ready</div>
<div class="t" style="left:2447.70px;top:1083.34px;font-size:29px;line-height:29px;color:#0f1c4d;letter-spacing:0.666px;">demo.456.com</div>
<svg style="position:absolute;left:2750px;top:1091.3400000000001px;" width="36" height="12" viewBox="0 0 36 12" fill="none"><circle cx="5.9" cy="6" r="3.9" fill="#8f98ad"/><circle cx="17.9" cy="6" r="3.9" fill="#8f98ad"/><circle cx="29.9" cy="6" r="3.9" fill="#8f98ad"/></svg>
<div style="position:absolute;left:608px;top:1145.3400000000001px;width:2192px;height:2px;background:#e1e4ec"></div>
<svg style="position:absolute;left:616px;top:1171.23px;" width="40" height="48" viewBox="0 0 40 48" fill="none"><path d="M14.6 13.3 L25.75 24 L14.6 34.5" stroke="#8f98ad" stroke-width="2.8" stroke-linecap="round" stroke-linejoin="round" fill="none" /></svg>
<div style="position:absolute;left:684.1px;top:1183.08px;width:32px;height:32px;border:2px solid #8a93ab;border-radius:8px;box-sizing:border-box;background:#fff"></div>
<div class="t" style="left:756.20px;top:1181.23px;font-size:29px;line-height:29px;color:#0f1c4d;letter-spacing:0.900px;">demo-xc</div>
<div class="t" style="left:1012.00px;top:1181.23px;font-size:29px;line-height:29px;color:#0f1c4d;letter-spacing:0.041px;">namespace_name</div>
<div class="t" style="left:1303.30px;top:1181.23px;font-size:29px;line-height:29px;color:#4068dd;letter-spacing:0.149px;">virtual_host_ready</div>
<div class="t" style="left:2447.70px;top:1181.23px;font-size:29px;line-height:29px;color:#0f1c4d;letter-spacing:0.541px;">demo.xc.com</div>
<svg style="position:absolute;left:2750px;top:1189.23px;" width="36" height="12" viewBox="0 0 36 12" fill="none"><circle cx="5.9" cy="6" r="3.9" fill="#8f98ad"/><circle cx="17.9" cy="6" r="3.9" fill="#8f98ad"/><circle cx="29.9" cy="6" r="3.9" fill="#8f98ad"/></svg>
<div style="position:absolute;left:608px;top:1243.23px;width:2192px;height:2px;background:#e1e4ec"></div>
<svg style="position:absolute;left:616px;top:1269.12px;" width="40" height="48" viewBox="0 0 40 48" fill="none"><path d="M14.6 13.3 L25.75 24 L14.6 34.5" stroke="#8f98ad" stroke-width="2.8" stroke-linecap="round" stroke-linejoin="round" fill="none" /></svg>
<div style="position:absolute;left:684.1px;top:1280.9699999999998px;width:32px;height:32px;border:2px solid #8a93ab;border-radius:8px;box-sizing:border-box;background:#fff"></div>
<div class="t" style="left:757.20px;top:1279.12px;font-size:29px;line-height:29px;color:#0f1c4d;letter-spacing:0.926px;">test04</div>
<div class="t" style="left:1012.00px;top:1279.12px;font-size:29px;line-height:29px;color:#0f1c4d;letter-spacing:0.041px;">namespace_name</div>
<div class="t" style="left:1303.30px;top:1279.12px;font-size:29px;line-height:29px;color:#4068dd;letter-spacing:0.157px;">virtual_host_pending_a_record</div>
<div style="position:absolute;left:1735.85px;top:1283.17px;width:19.9px;height:19.9px;border-radius:50%;background:#9299ab"></div>
<div class="t" style="left:1771.20px;top:1279.12px;font-size:29px;line-height:29px;color:#0f1c4d;letter-spacing:0.323px;">Provisioning</div>
<svg style="position:absolute;left:1948px;top:1279.12px;" width="28" height="28" viewBox="0 0 28 28" fill="none"><circle cx="14" cy="14" r="10.3" stroke="#8f98ad" stroke-width="2.8" fill="none"/><circle cx="14" cy="8.3" r="1.9" fill="#8f98ad"/><path d="M11.6 12.2 H14.2 V19.6 M11.2 19.6 H17" stroke="#8f98ad" stroke-width="2.6" stroke-linecap="round" stroke-linejoin="round" fill="none" /></svg>
<div class="t" style="left:2448.70px;top:1279.12px;font-size:29px;line-height:29px;color:#0f1c4d;letter-spacing:0.787px;">test04.net</div>
<svg style="position:absolute;left:2750px;top:1287.12px;" width="36" height="12" viewBox="0 0 36 12" fill="none"><circle cx="5.9" cy="6" r="3.9" fill="#8f98ad"/><circle cx="17.9" cy="6" r="3.9" fill="#8f98ad"/><circle cx="29.9" cy="6" r="3.9" fill="#8f98ad"/></svg>
<div style="position:absolute;left:608px;top:1341.12px;width:2192px;height:2px;background:#e1e4ec"></div>
<svg style="position:absolute;left:616px;top:1367.01px;" width="40" height="48" viewBox="0 0 40 48" fill="none"><path d="M14.6 13.3 L25.75 24 L14.6 34.5" stroke="#8f98ad" stroke-width="2.8" stroke-linecap="round" stroke-linejoin="round" fill="none" /></svg>
<div style="position:absolute;left:684.1px;top:1378.86px;width:32px;height:32px;border:2px solid #8a93ab;border-radius:8px;box-sizing:border-box;background:#fff"></div>
<div class="t" style="left:757.20px;top:1377.01px;font-size:29px;line-height:29px;color:#0f1c4d;letter-spacing:1.126px;">test05</div>
<div class="t" style="left:1012.00px;top:1377.01px;font-size:29px;line-height:29px;color:#0f1c4d;letter-spacing:0.041px;">namespace_name</div>
<div class="t" style="left:1303.30px;top:1377.01px;font-size:29px;line-height:29px;color:#4068dd;letter-spacing:0.157px;">virtual_host_pending_a_record</div>
<div style="position:absolute;left:1735.85px;top:1381.06px;width:19.9px;height:19.9px;border-radius:50%;background:#9299ab"></div>
<div class="t" style="left:1771.20px;top:1377.01px;font-size:29px;line-height:29px;color:#0f1c4d;letter-spacing:0.323px;">Provisioning</div>
<svg style="position:absolute;left:1948px;top:1377.01px;" width="28" height="28" viewBox="0 0 28 28" fill="none"><circle cx="14" cy="14" r="10.3" stroke="#8f98ad" stroke-width="2.8" fill="none"/><circle cx="14" cy="8.3" r="1.9" fill="#8f98ad"/><path d="M11.6 12.2 H14.2 V19.6 M11.2 19.6 H17" stroke="#8f98ad" stroke-width="2.6" stroke-linecap="round" stroke-linejoin="round" fill="none" /></svg>
<div class="t" style="left:2448.70px;top:1377.01px;font-size:29px;line-height:29px;color:#0f1c4d;letter-spacing:0.743px;">test05.net</div>
<svg style="position:absolute;left:2750px;top:1385.01px;" width="36" height="12" viewBox="0 0 36 12" fill="none"><circle cx="5.9" cy="6" r="3.9" fill="#8f98ad"/><circle cx="17.9" cy="6" r="3.9" fill="#8f98ad"/><circle cx="29.9" cy="6" r="3.9" fill="#8f98ad"/></svg>
<div style="position:absolute;left:608px;top:1439.01px;width:2228px;height:2px;background:#e1e4ec"></div>
<div style="position:absolute;left:608.3px;top:1480.3px;width:198.8px;height:47.3px;border:2px solid #dfe2ea;border-radius:7px;box-sizing:border-box"></div>
<div style="position:absolute;left:739.5px;top:1480.3px;width:2px;height:47.3px;background:#dfe2ea"></div>
<div style="position:absolute;left:608.3px;top:1480.3px;width:67.6px;height:47.3px;border:2px solid #4068dd;border-radius:7px 0 0 7px;box-sizing:border-box"></div>
<div class="t" style="left:628.40px;top:1491.70px;font-size:24.5px;line-height:24.5px;color:#4068dd;letter-spacing:-1.026px;">10</div>
<div class="t" style="left:695.60px;top:1491.70px;font-size:24.5px;line-height:24.5px;color:#5f6a82;letter-spacing:-0.026px;">50</div>
<div class="t" style="left:754.60px;top:1491.70px;font-size:24.5px;line-height:24.5px;color:#5f6a82;letter-spacing:-0.226px;">100</div>
<div class="t" style="left:824.10px;top:1491.70px;font-size:24.5px;line-height:24.5px;color:#5f6a82;letter-spacing:0.497px;">items per page</div>
<div class="t" style="left:2535.10px;top:1491.70px;font-size:24.5px;line-height:24.5px;color:#5f6a82;letter-spacing:0.432px;">1-10 of 35</div>
<div style="position:absolute;left:2666.1px;top:1480px;width:133.5px;height:47.2px;border:2px solid #dfe2ea;border-radius:7px;box-sizing:border-box;overflow:hidden"><div style="position:absolute;left:0;top:0;width:65px;height:43.2px;background:#f0f2f6"></div><div style="position:absolute;left:65px;top:0;width:2px;height:43.2px;background:#dfe2ea"></div></div>
<svg style="position:absolute;left:2692.0px;top:1491.0px;" width="16.2" height="26" viewBox="0 0 16.2 26" fill="none"><path d="M13.2 3 L3 13.0 L13.2 23" stroke="#d3d7e1" stroke-width="2.8" stroke-linecap="round" stroke-linejoin="round" fill="none" /></svg>
<svg style="position:absolute;left:2757.9px;top:1491.0px;" width="16.2" height="26" viewBox="0 0 16.2 26" fill="none"><path d="M3 3 L13.2 13.0 L3 23" stroke="#8f98ad" stroke-width="2.8" stroke-linecap="round" stroke-linejoin="round" fill="none" /></svg>
<svg style="position:absolute;left:725px;top:640px;" width="40" height="45" viewBox="0 0 40 45" fill="none"><defs><filter id="cs" x="-50%" y="-50%" width="200%" height="200%"><feGaussianBlur stdDeviation="1.2"/></filter></defs>
<path d="M8.9 8 L8.9 28.7 L13.5 25.1 L18 35.8 L21.7 33.6 L18 23.9 L24.8 23.5 Z" fill="#000" opacity="0.25" stroke="#000" stroke-width="4" stroke-linejoin="round" transform="translate(0.8 1.6)" filter="url(#cs)"/>
<path d="M8.9 8 L8.9 28.7 L13.5 25.1 L18 35.8 L21.7 33.6 L18 23.9 L24.8 23.5 Z" fill="#fff" stroke="#fff" stroke-width="4.4" stroke-linejoin="round"/>
<path d="M8.9 8 L8.9 28.7 L13.5 25.1 L18 35.8 L21.7 33.6 L18 23.9 L24.8 23.5 Z" fill="#000"/></svg>
<script>(function(){var w=window.innerWidth;if(w&&Math.abs(w-2880)>2){document.documentElement.style.zoom=(w/2880);}})();</script>
</body></html>
